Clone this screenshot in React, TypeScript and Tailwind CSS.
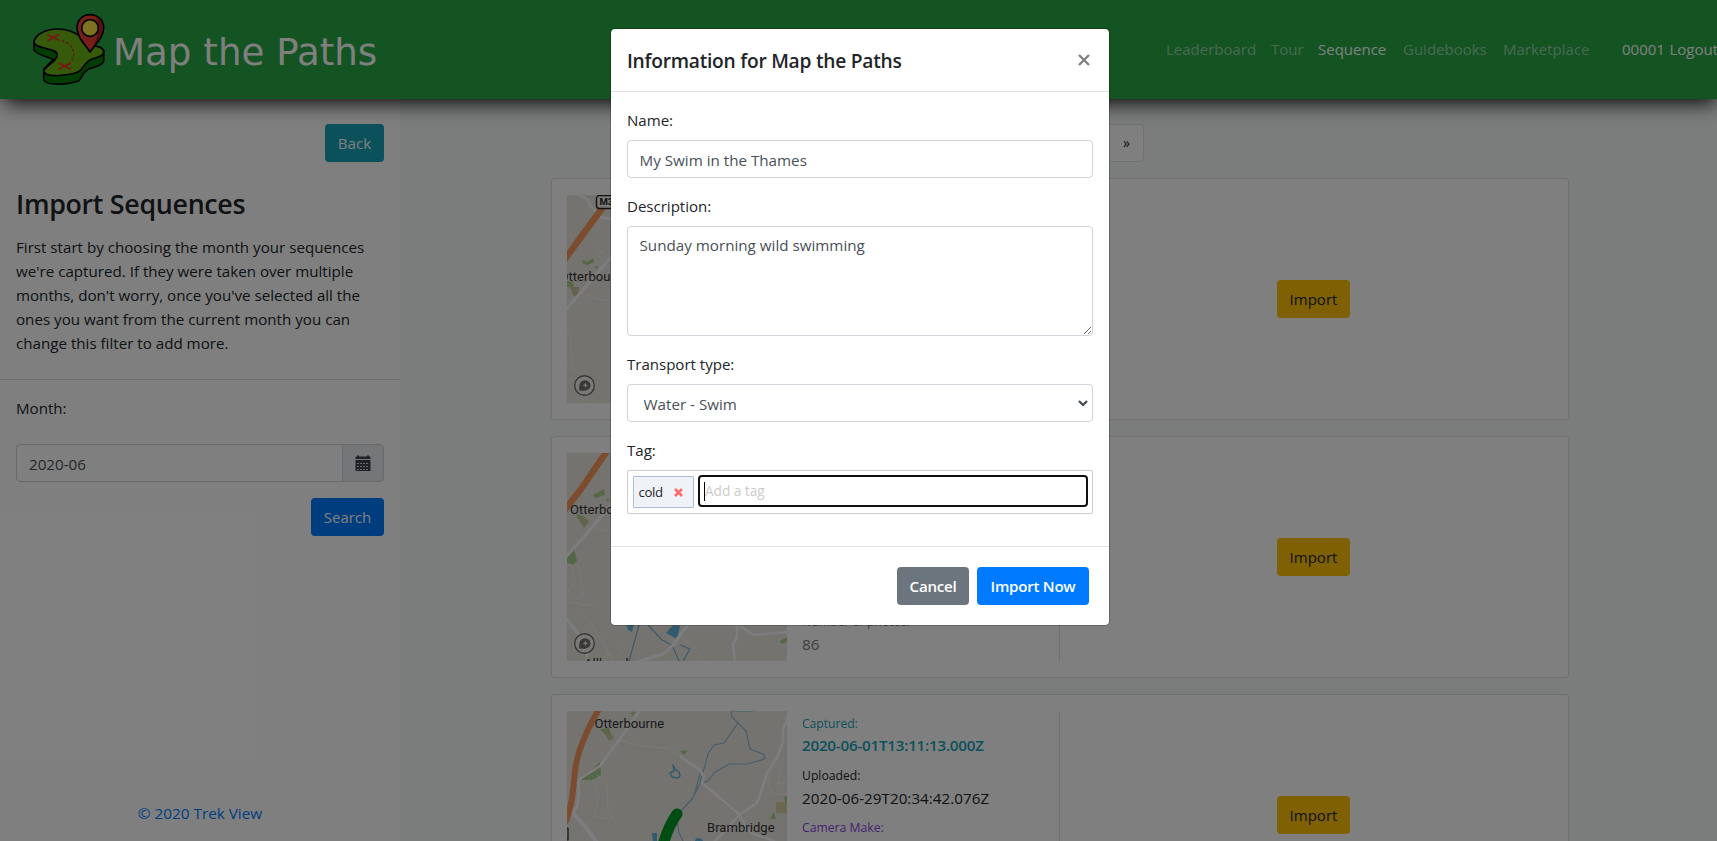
import React from "react";

const labelCls = "mb-2 block text-[15.1px] leading-6 tracking-[-0.03px] text-[#212529]";
const fieldCls =
  "block w-full rounded border border-[#ced4da] bg-white text-[15.2px] leading-6 text-[#495057] outline-none";

function Logo() {
  return (
    <svg className="h-[73px] w-[73px]" viewBox="96 39 219 219" fill="none" stroke="#000" strokeWidth="5" strokeLinejoin="round" strokeLinecap="round">
      <path fill="#007a06" d="M102 122V150C108 163 140 170 160 178L131 208V240C140 258 205 254 236 243C250 230 246 214 272 205C292 199 305 196 311 184V150Z" />
      <path fill="#6ab414" d="M102 125C106 102 140 87 172 87C200 87 228 98 246 114L268 136C288 136 310 142 311 155C312 168 296 171 282 175C262 180 256 192 247 204C238 220 214 222 190 225C166 228 136 230 131 214C133 198 172 186 172 164C170 150 148 148 128 143C112 138 100 134 102 125Z" />
      <g stroke="#f0332c" strokeWidth="5.5">
        <path d="M144 105L176 120M175 104L144 121M178 190L211 207M210 190L178 207" />
      </g>
      <path stroke="#b83a2c" strokeWidth="4.5" strokeDasharray="5 9" d="M187 123C212 128 226 152 219 172C217 180 214 184 210 188" />
      <path fill="#f23f36" d="M270 156C256 134 231 112 231 83C231 60 248 44 270 44C293 44 311 60 311 83C311 112 284 134 270 156Z" />
      <path stroke="none" fill="#b3201a" d="M286 49C302 56 308 68 308 83C308 106 290 126 276 145C290 118 304 84 286 49Z" />
      <circle cx="270" cy="84" r="25" fill="#fbe344" />
    </svg>
  );
}

function MapboxMark() {
  return (
    <g>
      <circle cx="17.5" cy="190.5" r="9.8" fill="#f4f3f1" stroke="#74716d" strokeWidth="1.4" />
      <path fill="#74716d" d="M12.3 195.6C11.6 190 13 185.3 18.4 185.3A5.1 5.1 0 0 1 23.4 190.3C23.4 195.200 18.500 196.4 12.3 195.6Z" />
      <path fill="#f4f3f1" d="M18.4 187.300L19.1 189.600L21.400 190.300L19.100 191.000L18.400 193.300L17.700 191.000L15.400 190.300L17.700 189.600Z" />
    </g>
  );
}

function MapFrame({ children }: { children: React.ReactNode }) {
  return (
    <svg className="block h-[208px] w-[220px] shrink-0 bg-[#eae6df]" viewBox="0 0 220 208" fill="none" strokeLinecap="round" strokeLinejoin="round">
      {children}
    </svg>
  );
}

const placeCls = "fill-[#333333] font-['Roboto'] text-[13px] font-normal tracking-[0.05px]";

function MapOne() {
  return (
    <MapFrame>
      <g fill="#a9cf8c">
        <path d="M15 65L20 67L26 63L27 67L21 70L16 69ZM27 72L31 71L30 74ZM0 86L6 87L7 93L0 92Z" />
      </g>
      <path fill="#c9c49c" d="M3 92L12 92L11 102L6 100Z" />
      <g stroke="#f7f5f2" strokeWidth="0.8">
        <path d="M15 98L30 104L44 106M0 135L4 141L5 166M0 170L6 175L18 181M5 166L9 180M32 50L35 57L30 61L37 64M29 55L38 58M18 198L22 208" />
      </g>
      <g stroke="#fbfbff" strokeWidth="3">
        <path strokeWidth="2.400" d="M12 0L20 4L25 13L34 22L46 25" />
        <path d="M-2 116L20 90L46 60" />
      </g>
      <path stroke="#f69a5c" strokeWidth="6.5" d="M-2 64L14 42L36 12L46 0" />
      <rect x="29.500" y="0.500" width="26" height="13" rx="3" fill="#f4f4f2" stroke="#222" strokeWidth="1.400" />
      <text x="32.500" y="10.300" className="fill-[#222222] font-['Roboto'] text-[9.500px] font-bold">M3</text>
      <text x="-7.500" y="86" className={placeCls}>Otterbourne</text>
      <MapboxMark />
    </MapFrame>
  );
}

function MapTwo() {
  return (
    <MapFrame>
      <g fill="#a9cf8c">
        <path d="M26 42L37 36L38 42L28 45ZM39 46L42 45L41 49ZM9 61L18 64L16 67L11 66ZM0 104L7 95L10 108L6 112L0 110ZM213 188L220 184V189L214 191Z" />
      </g>
      <path fill="#c9c49c" d="M11 66L18 65L22 68L17 75Z" />
      <g stroke="#f7f5f2" strokeWidth="0.8">
        <path d="M26 72L34 77L44 79M0 111L5 112L8 128L1 140M8 112L13 116L16 140L5 150M16 140L14 152L26 152M1 150L14 150M15 160L25 172L40 196L45 208M49 197L52 194L55 199L50 204M36 206L42 200L47 208M40 30L44 28M115 185L128 194L138 208" />
      </g>
      <g fill="#63b5dc">
        <path d="M59 170H67L65 179L61 177ZM99 180L106 172L113 173L110 186Z" />
      </g>
      <g stroke="#7db4d6" strokeWidth="1.200">
        <path d="M72 172L62 208M81 172L95 187L105 192L112 208M113 192L123 196L116 208" />
      </g>
      <g stroke="#fbfbff" strokeWidth="3">
        <path d="M-2 105L20 80L46 50M-2 164L15 186L20 198L20 210M122 170L106 192L96 201L66 210" />
        <path d="M170 170L170 184L166 192L168 210M172 172L186 182L222 179" strokeWidth="2.600" />
      </g>
      <path stroke="#f69a5c" strokeWidth="6.5" d="M-3 58L14 36L40 -2" />
      <text x="3" y="61" className={placeCls}>Otterbourne</text>
      <text x="17" y="215" className={placeCls}>Allbrook</text>
      <MapboxMark />
    </MapFrame>
  );
}

function MapThree() {
  return (
    <MapFrame>
      <g fill="#a9cf8c">
        <path d="M33 18L42 17L44 23L38 23ZM63 2L68 1L66 5ZM14 69L33 51L34 64L26 69ZM113 40L121 39L117 44ZM203 108L207 101L209 108ZM217 86L220 85V91H218Z" />
      </g>
      <path fill="#d9cf9e" d="M209 91H220V103L209 102Z" />
      <path fill="#cfc89e" d="M37 22L43 22L47 27L42 30Z" />
      <g stroke="#f7f5f2" strokeWidth="0.900">
        <path d="M53 29L62 32L75 35L100 37L114 46M30 64L40 75L41 100L49 112M26 68L32 82L27 106M27 106L46 108M10 127L28 104M203 50V64L201 72L206 84L218 83M207 72H220M212 60V74" />
      </g>
      <g stroke="#8fbdd8" strokeWidth="1.200">
        <path d="M164 -1L165 6L171 12L157 32L147 34L141 43L137 58L132 75L125 88L113 101L110 110L112 122L116 130M134 59L130 74L127 84M171 12L179 20L183 38L198 44L197 48L181 53L162 53L147 62L141 70L137 71M164 0H186" />
      </g>
      <path stroke="#63b5dc" strokeWidth="1.500" d="M106 54L107 60L103 62L105 66L111 67L113 65L112 61L108 58Z" />
      <path fill="#63b5dc" d="M85 122H90V132H86ZM128 130C128 126 135 126 136 130Z" />
      <g stroke="#fbfbff" strokeWidth="2.600">
        <path d="M74 -2L55 25L33 55L11 69L12 82L10 96L5 101L-2 104" />
        <path strokeWidth="4" d="M6 102L20 118L32 134" />
        <path d="M114 46L133 59L137 66L135 72L172 103L180 118L186 123L200 127L210 132" />
        <path d="M222 4L216 18L216 30L210 47L200 62L193 84L190 92L172 104L158 120L146 132" />
      </g>
      <path stroke="#f69a5c" strokeWidth="6" d="M32 -2C18 22 10 42 8 60C6 80 5 95 -1 110" />
      <path stroke="#009a26" strokeWidth="11" d="M110 103C104 111 100 120 96 134" />
      <path stroke="#222" strokeWidth="1.200" d="M-1 117H1V129H-1" />
      <text x="27.500" y="17" className={placeCls}>Otterbourne</text>
      <text x="140" y="121" className={placeCls}>Brambridge</text>
    </MapFrame>
  );
}

function Card({ map, children }: { map: React.ReactNode; children?: React.ReactNode }) {
  return (
    <div className="mb-4 flex h-[242px] w-[1018px] shrink-0 rounded border border-black/12 bg-white px-[15px] py-4">
      {map}
      <div className="w-[273px] border-r border-black/12 pl-[15px]">{children}</div>
      <div className="flex flex-1 items-center justify-center pl-[14px]">
        <button className="h-[38px] w-[73px] rounded bg-[#ffc107] text-[15px] leading-6 text-[#212529]">Import</button>
      </div>
    </div>
  );
}

function Sidebar() {
  return (
    <aside className="flex w-[400px] shrink-0 flex-col bg-white pt-[25px]">
      <div className="flex flex-col px-4">
        <button className="h-[38px] w-[59px] self-end rounded bg-[#17a2b8] text-[15.2px] leading-6 text-white">Back</button>
        <h2 className="mt-[25px] text-[26.800px] leading-[34px] font-semibold tracking-[-0.3px] text-[#212529]">Import Sequences</h2>
        <p className="mt-[14px] text-[15.150px] leading-6 whitespace-nowrap text-[#212529]">
          First start by choosing the month your sequences
          <br />
          we're captured. If they were taken over multiple
          <br />
          months, don't worry, once you've selected all the
          <br />
          ones you want from the current month you can
          <br />
          change this filter to add more.
        </p>
      </div>
      <hr className="mt-6 border-black/15" />
      <div className="flex flex-col px-4 pt-4">
        <label className="text-[15.100px] leading-6 text-[#212529]">Month:</label>
        <div className="mt-6 flex h-[38px]">
          <input
            className="w-[327px] rounded-l border border-[#ced4da] bg-white px-3 pt-[1px] text-[15.2px] leading-6 text-[#495057] outline-none"
            defaultValue="2020-06"
          />
          <span className="-ml-px flex w-[42px] items-center justify-center rounded-r border border-[#ced4da] bg-[#e9ecef]">
            <svg className="h-4 w-4" viewBox="0 0 16 16" fill="#3d434a">
              <path d="M0.500 4V2.500A1 1 0 0 1 1.500 1.500H2V0.500H4V1.500H12V0.500H14V1.500H14.500A1 1 0 0 1 15.500 2.500V4ZM0.500 5H15.500V16H0.500Z" />
              <path stroke="#c9ced3" strokeWidth="1" d="M2 8.500H14M2 11.500H14M2 14.500H14" strokeDasharray="2 1" />
            </svg>
          </span>
        </div>
        <button className="mt-4 h-[38px] w-[73px] self-end rounded bg-[#007bff] text-[15px] leading-6 text-white">Search</button>
      </div>
      <a className="mt-auto mb-[16px] text-center text-[15.300px] leading-6 text-[#007bff]">© 2020 Trek View</a>
    </aside>
  );
}

function Navbar() {
  const muted = "text-white/50";
  return (
    <nav className="relative z-10 flex h-[99px] w-[1720px] shrink-0 items-center bg-[#28a745] shadow-[0_7px_20px_-4px_#000]">
      <div className="flex w-[1166px] items-center pl-8">
        <Logo />
        <span className="ml-[8px] pt-1 font-['DejaVu_Sans'] text-[37.200px] leading-[44px] text-white">Map the Paths</span>
      </div>
      <div className="flex pb-[2px] text-[15px] leading-6 whitespace-nowrap">
        <a className={`w-[105px] ${muted}`}>Leaderboard</a>
        <a className={`w-[47px] ${muted}`}>Tour</a>
        <a className="w-[85px] text-white">Sequence</a>
        <a className={`w-[100px] ${muted}`}>Guidebooks</a>
        <a className={`w-[119px] ${muted}`}>Marketplace</a>
        <a className="w-[47.500px] text-white">00001</a>
        <a className="text-white">Logout</a>
      </div>
    </nav>
  );
}

function ImportModal() {
  return (
    <div className="mt-7 h-[598px] w-[500px] rounded-[5px] border border-black/20 bg-white bg-clip-padding">
      <div className="flex h-[63px] justify-between border-b border-[#dee2e6] px-4 pt-4">
        <h5 className="pt-px text-[19.200px] leading-[30px] font-semibold tracking-[-0.25px] text-[#212529]">Information for Map the Paths</h5>
        <svg className="mt-[9px] mr-[3px] h-3 w-3" viewBox="0 0 12 12" stroke="#7f7f7f" strokeWidth="2.300">
          <path d="M1 1L11 11M11 1L1 11" />
        </svg>
      </div>
      <div className="px-4 pt-4">
        <label className={labelCls}>Name:</label>
        <input className={`${fieldCls} mb-4 h-[38px] px-[11.500px] pt-[2px]`} defaultValue="My Swim in the Thames" />
        <label className={labelCls}>Description:</label>
        <textarea className={`${fieldCls} mb-4 h-[110px] px-[11.500px] py-1.5`} defaultValue="Sunday morning wild swimming" />
        <label className={labelCls}>Transport type:</label>
        <div className="relative mb-4">
          <select className={`${fieldCls} h-[38px] appearance-none px-[15.500px] pt-[2px]`} defaultValue="swim">
            <option value="swim">Water - Swim</option>
          </select>
          <svg className="absolute top-[16px] right-[5px] h-[7px] w-[10px]" viewBox="0 0 10 7" fill="none" stroke="#43484d" strokeWidth="2.200">
            <path d="M1 1L5 5L9 1" />
          </svg>
        </div>
        <label className={labelCls}>Tag:</label>
        <div className="flex h-[44px] rounded-[2px] border border-[#cccccc] px-[5px] pt-[5px]">
          <span className="flex h-8 w-[61px] shrink-0 items-center rounded-[1px] border border-[#a9bfdc] bg-[#eff2f7] pt-px pl-[4.500px] text-[13.200px] tracking-[-0.4px] text-[#212529]">
            cold
            <svg className="mb-px ml-[11px] h-[9px] w-[9px]" viewBox="0 0 9 9" stroke="#ff6b6b" strokeWidth="2.600">
              <path d="M1 1L8 8M8 1L1 8" />
            </svg>
          </span>
          <div className="-mt-px -mr-px ml-1 flex h-8 flex-1 items-center rounded-[4px] border-2 border-[#101010] pl-[4px]">
            <span className="h-[19px] w-px bg-black" />
            <input className="w-[300px] bg-transparent pt-px text-[13.600px] outline-none placeholder:text-[#cccccc]" placeholder="Add a tag" />
          </div>
        </div>
      </div>
      <div className="mt-8 flex justify-end gap-2 border-t border-[#dee2e6] pt-5 pr-5 text-[15.100px] leading-6 font-semibold tracking-[-0.25px] text-white">
        <button className="h-[38px] w-[72px] rounded bg-[#6c757d]">Cancel</button>
        <button className="h-[38px] w-[112px] rounded bg-[#007bff]">Import Now</button>
      </div>
    </div>
  );
}

export default function App() {
  return (
    <div className="relative h-[841px] w-full overflow-hidden font-['Open_Sans',sans-serif]">
      <div className="flex h-full w-[1720px] flex-col">
        <Navbar />
        <div className="flex min-h-0 flex-1">
          <Sidebar />
          <main className="flex flex-1 flex-col items-center overflow-hidden bg-[#f6fbf8] pt-[25px]">
            <div className="mb-4 flex h-[38px] w-[1018px] shrink-0 justify-end pr-[425px]">
              <button className="w-[36px] rounded-r border border-[#dee2e6] bg-white pl-px text-[14px] leading-5 text-[#212529]">»</button>
            </div>
            <Card map={<MapOne />} />
            <Card map={<MapTwo />}>
              <div className="pt-[158px] text-[#7c8084]">
                <div className="text-[12.200px] leading-[21px]">Number of photos:</div>
                <div className="text-[15.2px] leading-6">86</div>
              </div>
            </Card>
            <Card map={<MapThree />}>
              <div className="pt-[3px] text-[15.200px] leading-6 text-[#212529]">
                <div className="h-[50.5px] text-[#17a2b8]">
                  <div className="text-[12.100px] leading-[20px]">Captured:</div>
                  <div className="leading-[22px] font-semibold tracking-[-0.23px]">2020-06-01T13:11:13.000Z</div>
                </div>
                <div className="h-[52.5px]">
                  <div className="text-[12.200px] leading-[21px]">Uploaded:</div>
                  <div className="tracking-[0.03px]">2020-06-29T20:34:42.076Z</div>
                </div>
                <div className="text-[12.200px] leading-[21px] text-[#8a45e0]">Camera Make:</div>
              </div>
            </Card>
          </main>
        </div>
      </div>
      <div className="absolute inset-y-0 left-0 z-20 flex w-[1720px] items-start justify-center bg-black/50">
        <ImportModal />
      </div>
    </div>
  );
}
